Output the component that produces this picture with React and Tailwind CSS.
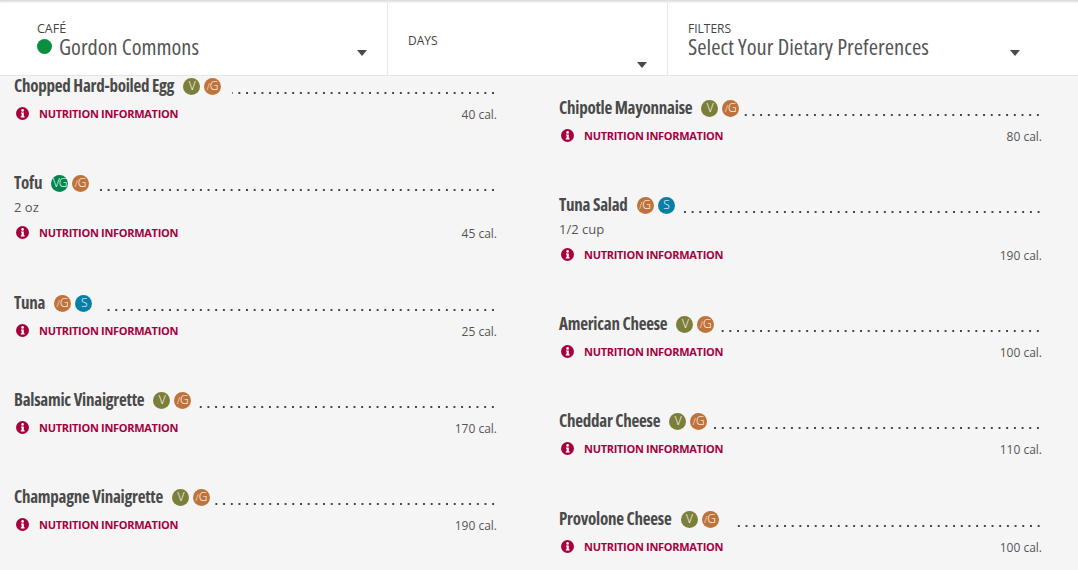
const leftItems = [
  { name: "Chopped Hard-boiled Egg", tags: ["V", "GF"], cal: 40, lead: "ml-[11px]", h: "h-[97px]" },
  { name: "Tofu", tags: ["VG", "GF"], cal: 45, note: "2 oz", lead: "ml-[8px]", h: "h-[120px]" },
  { name: "Tuna", tags: ["GF", "S"], cal: 25, lead: "ml-[12px]", h: "h-[97px]" },
  { name: "Balsamic Vinaigrette", tags: ["V", "GF"], cal: 170, lead: "ml-[8px]", h: "h-[97px]" },
  { name: "Champagne Vinaigrette", tags: ["V", "GF"], cal: 190, lead: "ml-[5px]", h: "h-[97px]" },
];

const rightItems = [
  { name: "Chipotle Mayonnaise", tags: ["V", "GF"], cal: 80, lead: "ml-[5px]", h: "h-[97px]" },
  { name: "Tuna Salad", tags: ["GF", "S"], cal: 190, note: "1/2 cup", lead: "ml-[6px]", h: "h-[119px]" },
  { name: "American Cheese", tags: ["V", "GF"], cal: 100, lead: "ml-[5px]", h: "h-[97px]" },
  { name: "Cheddar Cheese", tags: ["V", "GF"], cal: 110, lead: "ml-[5px]", h: "h-[98px]" },
  { name: "Provolone Cheese", tags: ["V", "GF"], cal: 100, lead: "ml-[15px]", h: "h-[97px]" },
];

function Caret() {
  return (
    <svg width="10" height="6" viewBox="0 0 10 6" className="shrink-0">
      <path d="M0 0h10L5 6z" fill="#4a4a4a" />
    </svg>
  );
}

function Tag({ type }) {
  if (type === "GF") {
    return (
      <span className="flex h-[17px] w-[17px] items-center justify-center rounded-full bg-[#bf733a] text-[12px] leading-none font-light text-white [font-stretch:normal]">
        <span className="text-[9px]">/</span>G
      </span>
    );
  }
  const color = type === "V" ? "bg-[#7c7f3a]" : type === "VG" ? "bg-[#00854f]" : "bg-[#0a7fa6]";
  return (
    <span className={`flex h-[17px] w-[17px] items-center justify-center rounded-full text-[12px] leading-none font-light tracking-[-1px] text-white [font-stretch:normal] ${color}`}>
      {type}
    </span>
  );
}

function InfoIcon() {
  return (
    <svg width="13" height="13" viewBox="0 0 13 13" className="shrink-0">
      <circle cx="6.5" cy="6.5" r="6.5" fill="#a6003e" />
      <circle cx="6.6" cy="3.4" r="1.3" fill="#fff" />
      <path d="M5 5.4h2.8v3.9h.8v1.2H4.8V9.3h.8V6.6H5z" fill="#fff" />
    </svg>
  );
}

function MenuItem({ item }) {
  return (
    <div className={item.h}>
      <div className="flex h-[20px] items-center">
        <span className="text-[17px] font-bold tracking-[-0.25px] text-[#4a4a4a]">{item.name}</span>
        <span className="ml-[9px] flex gap-[4px]">
          {item.tags.map((t) => (
            <Tag key={t} type={t} />
          ))}
        </span>
        {/* dot leader, anchored right so every row ends on the same dot */}
        <span
          className={`mt-[13px] h-[2px] flex-1 bg-[radial-gradient(circle,#444_0.9px,transparent_1.1px)] bg-[length:7.7px_2px] bg-right ${item.lead}`}
        />
      </div>
      {item.note && <div className="mt-[5px] text-[13px] leading-[18px] text-[#555] [font-stretch:normal]">{item.note}</div>}
      <div className={`flex items-center ${item.note ? "mt-[8px]" : "mt-[9px]"}`}>
        <span className="mb-[3px] ml-[2px]"><InfoIcon /></span>
        <a className="ml-[10px] text-[11px] font-bold tracking-[-0.3px] text-[#a6003e] [font-stretch:normal]">NUTRITION INFORMATION</a>
        <span className="mt-[1px] ml-auto text-[12px] text-[#555] [font-stretch:normal]">{item.cal} cal.</span>
      </div>
    </div>
  );
}

export default function App() {
  return (
    <div className="flex h-[570px] w-[1078px] flex-col overflow-hidden bg-[#f5f5f5] font-['Open_Sans',sans-serif] [font-stretch:condensed]">
      <header className="flex h-[76px] shrink-0 border-b border-b-[#e6e6e6] bg-white text-[#444] shadow-[inset_0_3px_2px_-1px_#dddddd]">
        <div className="flex w-[388px] items-start border-r border-[#e8e8e8] pt-[22px] pr-[20px] pl-[37px]">
          <div className="flex-1">
            <div className="text-[12.5px] leading-[14px] [font-stretch:normal]">CAFÉ</div>
            <div className="flex items-center gap-[7px]">
              <span className="h-[15px] w-[15px] rounded-full bg-[#0b8f3f]" />
              <span className="text-[22.3px] leading-[21px] text-[#555]">Gordon Commons</span>
            </div>
          </div>
          <div className="mt-[28px]"><Caret /></div>
        </div>
        <div className="flex w-[280px] items-start border-r border-[#e8e8e8] pt-[34px] pr-[20px] pl-[20px]">
          <div className="flex-1 text-[12px] leading-[14px] [font-stretch:normal]">DAYS</div>
          <div className="mt-[28px]"><Caret /></div>
        </div>
        <div className="flex flex-1 items-start pt-[22px] pr-[58px] pl-[20px]">
          <div className="flex-1">
            <div className="text-[12px] leading-[14px] [font-stretch:normal]">FILTERS</div>
            <div className="text-[22.5px] leading-[21px] text-[#555]">Select Your Dietary Preferences</div>
          </div>
          <div className="mt-[28px]"><Caret /></div>
        </div>
      </header>
      <main className="flex gap-[62px] pl-[14px]">
        <div className="w-[483px]">
          {leftItems.map((item) => (
            <MenuItem key={item.name} item={item} />
          ))}
        </div>
        <div className="w-[483px] pt-[22px]">
          {rightItems.map((item) => (
            <MenuItem key={item.name} item={item} />
          ))}
        </div>
      </main>
    </div>
  );
}
